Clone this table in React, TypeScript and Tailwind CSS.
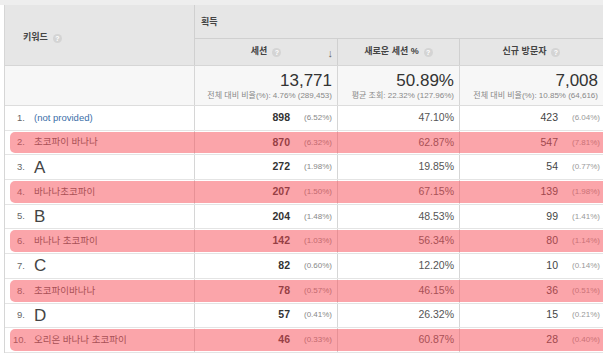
import React from 'react';

const rows = [
  { n: '1.', kw: '(not provided)', link: true, s: '898', sp: '(6.52%)', nr: '47.10%', v: '423', vp: '(6.04%)' },
  { n: '2.', kw: '초코파이 바나나', hl: true, s: '870', sp: '(6.32%)', nr: '62.87%', v: '547', vp: '(7.81%)' },
  { n: '3.', kw: 'A', big: true, s: '272', sp: '(1.98%)', nr: '19.85%', v: '54', vp: '(0.77%)' },
  { n: '4.', kw: '바나나초코파이', hl: true, s: '207', sp: '(1.50%)', nr: '67.15%', v: '139', vp: '(1.98%)' },
  { n: '5.', kw: 'B', big: true, s: '204', sp: '(1.48%)', nr: '48.53%', v: '99', vp: '(1.41%)' },
  { n: '6.', kw: '바나나 초코파이', hl: true, s: '142', sp: '(1.03%)', nr: '56.34%', v: '80', vp: '(1.14%)' },
  { n: '7.', kw: 'C', big: true, s: '82', sp: '(0.60%)', nr: '12.20%', v: '10', vp: '(0.14%)' },
  { n: '8.', kw: '초코파이바나나', hl: true, s: '78', sp: '(0.57%)', nr: '46.15%', v: '36', vp: '(0.51%)' },
  { n: '9.', kw: 'D', big: true, s: '57', sp: '(0.41%)', nr: '26.32%', v: '15', vp: '(0.21%)' },
  { n: '10.', kw: '오리온 바나나 초코파이', hl: true, s: '46', sp: '(0.33%)', nr: '60.87%', v: '28', vp: '(0.40%)' },
];

const Help = () => (
  <span className="inline-flex items-center justify-center w-[9px] h-[9px] rounded-full bg-[#d4d4d4] text-white text-[7px] font-bold leading-none ml-[5px]">?</span>
);

const cols = 'grid grid-cols-[190px_143px_122px_1fr]';

export default function App() {
  return (
    <div className="w-[603px] h-[356px] bg-white border-t-[5px] border-[#eeeeee] pl-[4px] overflow-hidden text-[#333]" style={{ fontFamily: '"Liberation Sans", "Noto Sans CJK KR", sans-serif' }}>
      <div className="border-l border-[#d6d6d6]">
        {/* Header */}
        <div className={`${cols} bg-[#e6e6e6] border-b border-[#d6d6d6]`}>
          <div className="row-span-2 flex items-center pl-[18px] pt-[6px] border-r border-[#d0d0d0] text-[9px] font-bold text-[#444]">
            키워드 <Help />
          </div>
          <div className="col-span-3 h-[34px] flex items-center pl-[6px] pt-[2px] text-[9px] font-bold text-[#444] border-b border-[#d0d0d0]">획득</div>
          <div className="h-[26px] flex items-center justify-center relative border-r border-[#d0d0d0] text-[9px] font-bold text-[#444]">
            세션 <Help />
            <span className="absolute right-[4px] top-[6px] text-[11px] text-[#666] font-normal">↓</span>
          </div>
          <div className="h-[26px] flex items-center justify-center border-r border-[#d0d0d0] text-[9px] font-bold text-[#444]">
            새로운 세션 % <Help />
          </div>
          <div className="h-[26px] flex items-center justify-center text-[9px] font-bold text-[#444]">
            신규 방문자 <Help />
          </div>
        </div>

        {/* Totals */}
        <div className={`${cols} bg-[#f7f7f7] border-b border-[#dddddd] h-[40px]`}>
          <div className="border-r border-[#d6d6d6]" />
          <div className="flex flex-col items-end justify-center pr-[5px] pt-[2px] border-r border-[#d6d6d6]">
            <div className="text-[17px] leading-[19px] text-[#333]">13,771</div>
            <div className="text-[8px] text-[#888] whitespace-nowrap">전체 대비 비율(%): 4.76% (289,453)</div>
          </div>
          <div className="flex flex-col items-end justify-center pr-[5px] pt-[2px] border-r border-[#d6d6d6]">
            <div className="text-[17px] leading-[19px] text-[#333]">50.89%</div>
            <div className="text-[8px] text-[#888] whitespace-nowrap">평균 조회: 22.32% (127.96%)</div>
          </div>
          <div className="flex flex-col items-end justify-center pr-[5px] pt-[2px]">
            <div className="text-[17px] leading-[19px] text-[#333]">7,008</div>
            <div className="text-[8px] text-[#888] whitespace-nowrap">전체 대비 비율(%): 10.85% (64,616)</div>
          </div>
        </div>

        {/* Rows */}
        {rows.map((r) => (
          <div key={r.n} className={`${cols} relative h-[24.7px] border-b border-[#e4e4e4]`}>
            <div className="flex items-center border-r border-[#d6d6d6] text-[9.5px]">
              <span className={`text-[#666] w-[29px] ${r.n.length > 2 ? 'pl-[8px]' : 'pl-[12px]'}`}>{r.n}</span>
              {r.link ? (
                <span className="text-[#3b6ea8]">{r.kw}</span>
              ) : r.big ? (
                <span className="text-[17px] text-[#444] leading-none">{r.kw}</span>
              ) : (
                <span className="text-[#555]">{r.kw}</span>
              )}
            </div>
            <div className="flex items-center justify-end pr-[5px] border-r border-[#d6d6d6]">
              <span className="text-[10.5px] font-bold text-[#333]">{r.s}</span>
              <span className="w-[42px] text-right text-[8px] text-[#888]">{r.sp}</span>
            </div>
            <div className="flex items-center justify-end pr-[5px] border-r border-[#d6d6d6] text-[10.5px] text-[#555]">{r.nr}</div>
            <div className="flex items-center justify-end pr-[3px]">
              <span className="text-[10.5px] text-[#444]">{r.v}</span>
              <span className="w-[42px] text-right text-[8px] text-[#999]">{r.vp}</span>
            </div>
            {r.hl && (
              <div className="absolute left-[5px] right-0 top-[1px] bottom-[1px] rounded-l-[5px] bg-[rgba(248,75,85,0.5)] pointer-events-none" />
            )}
          </div>
        ))}
      </div>
    </div>
  );
}
